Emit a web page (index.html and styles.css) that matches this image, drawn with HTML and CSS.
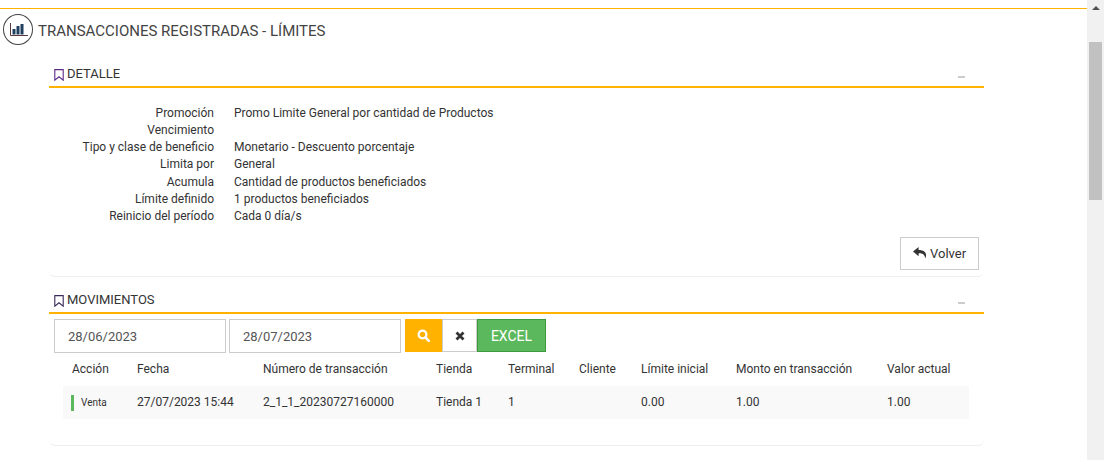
FILE: index.html
```html
<!DOCTYPE html>
<html lang="es">
<head>
    <meta charset="UTF-8">
    <title>Transacciones registradas - Límites</title>
    <link rel="stylesheet" href="styles.css">
</head>
<body>
    <div class="page">
        <div class="content">
            <div class="page-title">
                <span class="title-icon">
                    <svg width="18" height="14" viewBox="0 0 18 14"><path d="M.5 0v12.500H18" fill="none" stroke="#5a3a3a" stroke-width="1"/><path d="M2.500 6h3v5.500h-3zM6.500 3h3v8.500h-3zM10.500 1h3v10.500h-3z" fill="#1f3f5f"/></svg>
                </span>
                <h1>TRANSACCIONES REGISTRADAS - LÍMITES</h1>
            </div>

            <section class="panel panel-detail">
                <div class="panel-head">
                    <svg class="mark" width="10" height="12" viewBox="0 0 10 12"><path d="M.8.6h8.400v10.600L5 7.800.8 11.200z" fill="none" stroke="#5b2a86" stroke-width="1.100"/></svg>
                    <span>DETALLE</span>
                    <span class="collapse"></span>
                </div>
                <dl class="detail">
                    <dt>Promoción</dt><dd>Promo Limite General por cantidad de Productos</dd>
                    <dt>Vencimiento</dt><dd></dd>
                    <dt>Tipo y clase de beneficio</dt><dd>Monetario - Descuento porcentaje</dd>
                    <dt>Limita por</dt><dd>General</dd>
                    <dt>Acumula</dt><dd>Cantidad de productos beneficiados</dd>
                    <dt>Límite definido</dt><dd>1 productos beneficiados</dd>
                    <dt>Reinicio del período</dt><dd>Cada 0 día/s</dd>
                </dl>
                <div class="actions">
                    <button class="btn-back">
                        <svg width="14" height="12" viewBox="0 0 14 12"><path d="M5.600 0 0 4.600l5.600 4.600V6.300c3.600 0 6 .6 6.600 5.200C14.400 6.600 12.400 3 5.600 2.900z" fill="#333"/></svg>
                        Volver
                    </button>
                </div>
            </section>

            <section class="panel panel-moves">
                <div class="panel-head">
                    <svg class="mark" width="10" height="12" viewBox="0 0 10 12"><path d="M.8.6h8.400v10.600L5 7.800.8 11.200z" fill="none" stroke="#3a2a5a" stroke-width="1.100"/></svg>
                    <span>MOVIMIENTOS</span>
                    <span class="collapse"></span>
                </div>
                <div class="filters">
                    <input class="date" value="28/06/2023">
                    <input class="date" value="28/07/2023">
                    <button class="btn-search">
                        <svg width="13" height="13" viewBox="0 0 13 13"><circle cx="5.500" cy="5.500" r="3.900" fill="none" stroke="#fff" stroke-width="2.200"/><path d="m8.500 8.500 3.300 3.300" stroke="#fff" stroke-width="2.600" stroke-linecap="round"/></svg>
                    </button>
                    <button class="btn-clear">
                        <svg width="10" height="10" viewBox="0 0 10 10"><path d="m1.500 1.500 7 7m0-7-7 7" stroke="#333" stroke-width="2.800"/></svg>
                    </button>
                    <button class="btn-excel">EXCEL</button>
                </div>
                <table class="moves">
                    <thead>
                        <tr>
                            <th class="c-accion">Acción</th>
                            <th class="c-fecha">Fecha</th>
                            <th class="c-num">Número de transacción</th>
                            <th class="c-tienda">Tienda</th>
                            <th class="c-term">Terminal</th>
                            <th class="c-cliente">Cliente</th>
                            <th class="c-limite">Límite inicial</th>
                            <th class="c-monto">Monto en transacción</th>
                            <th>Valor actual</th>
                        </tr>
                    </thead>
                    <tbody>
                        <tr>
                            <td><span class="tag">Venta</span></td>
                            <td>27/07/2023 15:44</td>
                            <td>2_1_1_20230727160000</td>
                            <td>Tienda 1</td>
                            <td>1</td>
                            <td></td>
                            <td>0.00</td>
                            <td>1.00</td>
                            <td>1.00</td>
                        </tr>
                    </tbody>
                </table>
            </section>
        </div>
        <div class="scrollbar">
            <span class="arrow"></span>
            <span class="thumb"></span>
        </div>
    </div>
</body>
</html>
```

FILE: styles.css
```css
* {
    box-sizing: border-box;
}

html, body {
    margin: 0;
    height: 100%;
    overflow: hidden;
}

body {
    background: #fff;
    color: #333;
    font-family: Roboto, 'Liberation Sans', sans-serif;
    font-size: 12px;
    line-height: 1.42857;
}

.page {
    display: flex;
    height: 460px;
}

.content {
    flex: 1;
    min-width: 0;
    padding-top: 8px;
}

.page-title {
    display: flex;
    align-items: flex-start;
    gap: 5px;
    height: 38px;
    padding: 5px 0 0 3px;
    border-top: 1px solid #ffb300;
}

.title-icon {
    display: flex;
    align-items: center;
    justify-content: center;
    width: 30px;
    height: 31px;
    padding-left: 1px;
    border: 1px solid #444;
    border-radius: 50%;
}

.page-title h1 {
    margin: 6px 0 0;
    font-size: 15px;
    font-weight: 400;
    line-height: 22px;
    color: #444;
}

.panel {
    width: 935px;
    margin-left: 49px;
    border-bottom: 1px solid #eee;
    border-radius: 0 0 6px 6px;
}

.panel-detail {
    margin-top: 18px;
    margin-bottom: 13px;
    height: 213px;
}

.panel-moves {
    padding-bottom: 26px;
}

.panel-head {
    display: flex;
    align-items: center;
    gap: 3px;
    height: 24px;
    padding: 0 5px 1px;
    border-bottom: 2px solid #ffb300;
    color: #333;
    font-size: 13px;
}

.collapse {
    width: 7px;
    height: 2px;
    margin-left: auto;
    margin-right: 14px;
    margin-top: 5px;
    background: #ccc;
}

.detail {
    display: grid;
    grid-template-columns: 165px 1fr;
    column-gap: 20px;
    margin: 17px 0 0;
}

.detail dt {
    font-weight: 400;
    text-align: right;
}

.detail dd {
    margin: 0;
    min-height: 17px;
}

.actions {
    display: flex;
    justify-content: flex-end;
    margin-top: 12px;
    padding-right: 5px;
}

.btn-back {
    display: flex;
    align-items: center;
    gap: 3px;
    width: 79px;
    height: 33px;
    padding: 0 0 0 12px;
    background: #fff;
    border: 1px solid #ccc;
    color: #333;
    font: 13px Roboto, 'Liberation Sans', sans-serif;
}

.filters {
    display: flex;
    height: 39px;
    padding: 5px 0 0 5px;
}

.date {
    width: 172px;
    height: 34px;
    margin-right: 3px;
    padding: 0 13px;
    border: 1px solid #ccc;
    color: #555;
    font: 13px Roboto, 'Liberation Sans', sans-serif;
}

.filters button {
    display: flex;
    align-items: center;
    justify-content: center;
    height: 33px;
    padding: 0;
    border: 1px solid #ccc;
    font: 14px Roboto, 'Liberation Sans', sans-serif;
}

.filters .btn-search {
    width: 37px;
    margin-left: 1px;
    background: #ffb300;
    border-color: #ffb300;
}

.btn-clear {
    width: 35px;
    background: #fff;
}

.filters .btn-excel {
    width: 69px;
    background: #5cb85c;
    border-color: #3f9a3f;
    color: #fff;
}

.moves {
    width: 906px;
    margin: 0 0 0 14px;
    border-collapse: collapse;
    table-layout: fixed;
}

.moves th {
    height: 33px;
    padding: 0;
    font-weight: 400;
    text-align: left;
}

.moves td {
    height: 33px;
    padding: 0;
    background: #f9f9f9;
}

.moves th:first-child {
    padding-left: 9px;
}

.moves td:first-child {
    padding-left: 8px;
}

.c-accion { width: 74px; }
.c-fecha { width: 126px; }
.c-num { width: 173px; }
.c-tienda { width: 72px; }
.c-term { width: 71px; }
.c-cliente { width: 62px; }
.c-limite { width: 95px; }
.c-monto { width: 151px; }

.tag {
    display: block;
    padding-left: 7px;
    border-left: 3px solid #5cb85c;
    font-size: 10px;
    line-height: 16px;
}

.scrollbar {
    position: relative;
    flex: none;
    width: 17px;
    background: #f1f1f1;
}

.arrow {
    position: absolute;
    top: 6px;
    left: 5px;
    border-left: 4px solid transparent;
    border-right: 4px solid transparent;
    border-bottom: 4px solid #505050;
}

.thumb {
    position: absolute;
    top: 42px;
    left: 2px;
    width: 13px;
    height: 158px;
    background: #c1c1c1;
}
```
